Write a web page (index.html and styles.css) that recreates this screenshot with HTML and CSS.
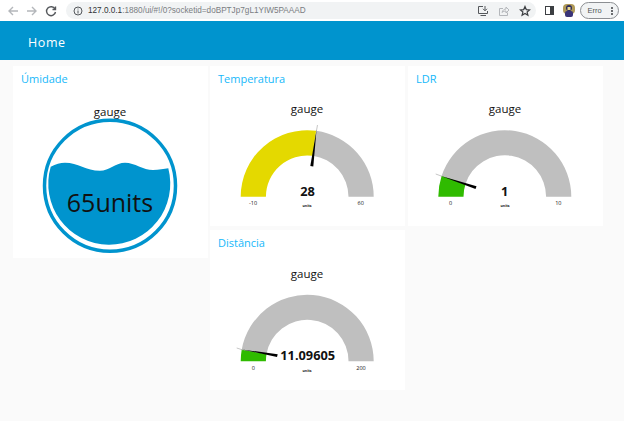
FILE: index.html
```html
<!DOCTYPE html>
<html lang="en">
<head>
    <meta charset="UTF-8">
    <title>Node-RED Dashboard</title>
    <link rel="stylesheet" href="styles.css">
</head>
<body>
    <div class="browser-bar">
        <div class="nav-icons">
            <svg width="14" height="14" viewBox="0 0 14 14" class="icon-off"><path d="M12 7H3M7 3L3 7l4 4"/></svg>
            <svg width="14" height="14" viewBox="0 0 14 14" class="icon-off"><path d="M2 7h9M7 3l4 4-4 4"/></svg>
            <svg width="14" height="14" viewBox="0 0 14 14" class="icon-on"><path d="M11 5a4.500 4.500 0 1 0 .5 3M11.500 2.500V5.500H8.500"/></svg>
        </div>
        <div class="address">
            <svg width="10" height="10" viewBox="0 0 10 10" class="icon-on thin"><circle cx="5" cy="5" r="4"/><path d="M5 4.500V7.500M5 2.500V3.500"/></svg>
            <span class="url"><b>127.0.0.1</b>:1880/ui/#!/0?socketid=doBPTJp7gL1YIW5PAAAD</span>
            <div class="address-icons">
                <svg width="12" height="12" viewBox="0 0 12 12" class="icon-on thin"><path d="M6 1.500H1.500V8.500H10.500V6M3.500 10.500H9M8 1V5.500M6 3.800L8 5.800 10 3.800"/></svg>
                <svg width="12" height="12" viewBox="0 0 12 12" class="icon-off thin"><path d="M5 3.500H1.500V10.500H9.500V7.500M4 7.500C4.500 5 6.500 4 8 4V2l3 3-3 3V6C6.500 6 5 6.500 4 7.500Z"/></svg>
                <svg width="12" height="12" viewBox="0 0 12 12" class="icon-on thick"><path d="M6 1.500L7.300 4.600 10.600 4.900 8.100 7 8.900 10.300 6 8.500 3.100 10.300 3.900 7 1.400 4.900 4.700 4.600Z"/></svg>
            </div>
        </div>
        <div class="side-panel"></div>
        <svg width="12" height="13" viewBox="0 0 12 13" class="avatar"><rect x="0" y="0" width="12" height="10" rx="4" fill="#b09a58"/><circle cx="6" cy="4" r="3" fill="#2c2a5c"/><rect x="4.500" y="3" width="3" height="3" fill="#e8d890"/><rect x="2" y="7" width="8" height="6" rx="2" fill="#3a3478"/></svg>
        <div class="error-pill"><span>Erro</span><i class="dots"></i></div>
    </div>

    <header class="toolbar">Home</header>

    <main class="dashboard">
        <div class="col">
            <section class="card card-tall">
                <h2>Úmidade</h2>
                <svg class="gauge" width="195" height="166" viewBox="0 0 195 166">
                    <text x="97" y="23.500" class="gauge-title">gauge</text>
                    <circle cx="97" cy="93.700" r="65.500" class="ring"/>
                    <path class="water" d="M37.700 74.700C43 72 47 70.700 52 70.700C65 70.700 73 78.700 87 78.700C96 78.700 103 70.700 112 70.700C122 70.700 130 78 140 78C146 78 151 77 155.300 76.300A61 61 0 1 1 37.700 74.700Z"/>
                    <text x="97" y="120.300" class="liquid-value">65units</text>
                </svg>
            </section>
        </div>

        <div class="col">
            <section class="card">
                <h2>Temperatura</h2>
                <svg class="gauge" width="195" height="134" viewBox="0 0 195 134">
                    <text x="97" y="21" class="gauge-title">gauge</text>
                    <path class="arc-off" d="M106.100 38.800A66.500 66.500 0 0 1 163.700 104.700H138.500A41.300 41.300 0 0 0 102.700 63.800Z"/>
                    <path class="arc-yellow" d="M30.700 104.700A66.500 66.500 0 0 1 106.100 38.800L102.700 63.800A41.300 41.300 0 0 0 55.900 104.700Z"/>
                    <line x1="107.500" y1="33" x2="106.400" y2="39" class="needle-tip"/>
                    <polygon class="needle" points="106.500,38 100.300,74 103.300,74.500"/>
                    <text x="97.500" y="103.700" class="gauge-value">28</text>
                    <text x="43" y="113" class="gauge-limit">-10</text>
                    <text x="150.700" y="113" class="gauge-limit">60</text>
                    <text x="97" y="115" class="gauge-units">units</text>
                </svg>
            </section>
            <section class="card">
                <h2>Distância</h2>
                <svg class="gauge" width="195" height="134" viewBox="0 0 195 134">
                    <text x="97" y="22" class="gauge-title">gauge</text>
                    <path class="arc-off" d="M31.700 93.800A66.500 66.500 0 0 1 163.700 105.300H138.500A41.300 41.300 0 0 0 56.500 98.100Z"/>
                    <path class="arc-green" d="M30.700 105.300A66.500 66.500 0 0 1 31.700 93.800L56.500 98.100A41.300 41.300 0 0 0 55.900 105.300Z"/>
                    <line x1="26.700" y1="92" x2="33" y2="94" class="needle-tip"/>
                    <polygon class="needle" points="32,93.500 67.700,98.300 67,101"/>
                    <text x="97.700" y="103.700" class="gauge-value">11.09605</text>
                    <text x="43.300" y="114" class="gauge-limit">0</text>
                    <text x="151" y="114" class="gauge-limit">200</text>
                    <text x="97" y="116" class="gauge-units">units</text>
                </svg>
            </section>
        </div>

        <div class="col">
            <section class="card">
                <h2>LDR</h2>
                <svg class="gauge" width="195" height="134" viewBox="0 0 195 134">
                    <text x="97" y="21" class="gauge-title">gauge</text>
                    <path class="arc-off" d="M33.600 84.100A66.500 66.500 0 0 1 163.300 104.700H138.100A41.300 41.300 0 0 0 57.500 91.900Z"/>
                    <path class="arc-green" d="M30.300 104.700A66.500 66.500 0 0 1 33.600 84.100L57.500 91.900A41.300 41.300 0 0 0 55.500 104.700Z"/>
                    <line x1="27.700" y1="82" x2="34" y2="84.300" class="needle-tip"/>
                    <polygon class="needle" points="33,84 68.500,94.300 67.500,97"/>
                    <text x="96.700" y="103.700" class="gauge-value">1</text>
                    <text x="42.700" y="113" class="gauge-limit">0</text>
                    <text x="150.300" y="113" class="gauge-limit">10</text>
                    <text x="97" y="115" class="gauge-units">units</text>
                </svg>
            </section>
        </div>
    </main>
</body>
</html>
```

FILE: styles.css
```css
body {
    margin: 0;
    height: 421px;
    overflow: hidden;
    background-color: #fafafa;
    font-family: "Open Sans", "Noto Sans", sans-serif;
}

/* browser chrome */
.browser-bar {
    display: flex;
    align-items: center;
    height: 21px;
    background-color: #ffffff;
}

.nav-icons {
    display: flex;
    gap: 5px;
    margin-left: 6px;
    width: 60px;
}

.icon-off, .icon-on {
    fill: none;
    stroke-width: 1.4;
}

.icon-off {
    stroke: #b4b7bb;
}

.icon-on {
    stroke: #55585c;
}

.thin {
    stroke-width: 1;
}

.thick {
    stroke: #3c3f43;
    stroke-width: 1.2;
}

.address {
    display: flex;
    align-items: center;
    gap: 5px;
    width: 470px;
    height: 17px;
    box-sizing: border-box;
    padding: 0 5px 0 7px;
    border-radius: 9px;
    background-color: #f1f3f4;
}

.url {
    font-family: "Liberation Sans", sans-serif;
    font-size: 8.2px;
    color: #7a7d82;
    white-space: nowrap;
}

.url b {
    font-weight: normal;
    color: #303236;
}

.address-icons {
    display: flex;
    gap: 9px;
    margin-left: auto;
}

.side-panel {
    width: 3.5px;
    height: 7px;
    margin-left: 9px;
    border: 1.5px solid #3c3f43;
    border-right-width: 4px;
}

.avatar {
    margin-left: 9px;
}

.error-pill {
    display: flex;
    align-items: center;
    justify-content: space-between;
    width: 39px;
    height: 17px;
    box-sizing: border-box;
    margin-left: 5px;
    padding: 0 5px 0 7px;
    border: 1px solid #8c8f93;
    border-radius: 9px;
    background-color: #f1f3f4;
    font-family: "Liberation Sans", sans-serif;
    font-size: 7.5px;
    color: #505356;
}

.dots {
    width: 2px;
    height: 2px;
    border-radius: 50%;
    background-color: #3c3f43;
    box-shadow: 0 -3px 0 #3c3f43, 0 3px 0 #3c3f43;
}

/* dashboard */
.toolbar {
    height: 39px;
    line-height: 43px;
    box-sizing: border-box;
    padding-left: 28px;
    background-color: #0094ce;
    color: #ffffff;
    font-size: 12.5px;
    letter-spacing: 0.6px;
}

.dashboard {
    display: flex;
    align-items: flex-start;
    gap: 2px;
    padding: 6px 0 0 13px;
}

.col {
    display: flex;
    flex-direction: column;
    gap: 4px;
    width: 195px;
}

.col:last-child {
    margin-left: 1px;
}

.card {
    height: 160px;
    background-color: #ffffff;
}

.card-tall {
    height: 192px;
}

.card h2 {
    margin: 0;
    height: 26px;
    box-sizing: border-box;
    padding: 5px 0 0 8px;
    font-size: 11px;
    line-height: 16px;
    font-weight: 500;
    color: #16b8fa;
}

.gauge {
    display: block;
}

.gauge text {
    text-anchor: middle;
    fill: #111111;
}

.gauge .gauge-title {
    font-size: 11.500px;
    font-weight: 500;
}

.gauge .gauge-value {
    font-size: 12.800px;
    font-weight: 700;
}

.gauge .gauge-limit {
    font-size: 5.500px;
}

.gauge .gauge-units {
    font-size: 3.500px;
    font-weight: 700;
}

.gauge .liquid-value {
    font-size: 25px;
}

.ring {
    fill: none;
    stroke: #0094ce;
    stroke-width: 3.5;
}

.water {
    fill: #0094ce;
}

.arc-off {
    fill: #bfbfbf;
}

.arc-yellow {
    fill: #e4d900;
}

.arc-green {
    fill: #2fbb00;
}

.needle {
    fill: #000000;
}

.needle-tip {
    stroke: #a0a0a0;
    stroke-width: 0.6;
}
```
